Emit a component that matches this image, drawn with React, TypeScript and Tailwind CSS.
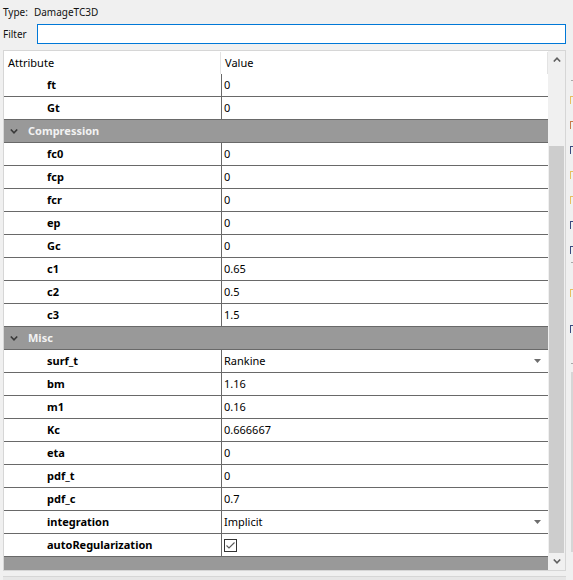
import React from 'react';

type Row =
  | { kind: 'attr'; name: string; value: string; dropdown?: boolean; check?: boolean }
  | { kind: 'group'; name: string };

const rows: Row[] = [
  { kind: 'attr', name: 'ft', value: '0' },
  { kind: 'attr', name: 'Gt', value: '0' },
  { kind: 'group', name: 'Compression' },
  { kind: 'attr', name: 'fc0', value: '0' },
  { kind: 'attr', name: 'fcp', value: '0' },
  { kind: 'attr', name: 'fcr', value: '0' },
  { kind: 'attr', name: 'ep', value: '0' },
  { kind: 'attr', name: 'Gc', value: '0' },
  { kind: 'attr', name: 'c1', value: '0.65' },
  { kind: 'attr', name: 'c2', value: '0.5' },
  { kind: 'attr', name: 'c3', value: '1.5' },
  { kind: 'group', name: 'Misc' },
  { kind: 'attr', name: 'surf_t', value: 'Rankine', dropdown: true },
  { kind: 'attr', name: 'bm', value: '1.16' },
  { kind: 'attr', name: 'm1', value: '0.16' },
  { kind: 'attr', name: 'Kc', value: '0.666667' },
  { kind: 'attr', name: 'eta', value: '0' },
  { kind: 'attr', name: 'pdf_t', value: '0' },
  { kind: 'attr', name: 'pdf_c', value: '0.7' },
  { kind: 'attr', name: 'integration', value: 'Implicit', dropdown: true },
  { kind: 'attr', name: 'autoRegularization', value: '', check: true },
];

// icon edges of the neighbouring tree, cut off by the splitter
const sideIcons = ['#e8c060', '#c87a4a', '#3a4a80', '#e8c060', '#e8c060', '#3a4a80', '#3a4a80'];

function IconEdge({ color }: { color: string }) {
  return (
    <svg width="3" height="8" viewBox="0 0 3 8">
      <rect x="0" y="0" width="3" height="1" fill={color} />
      <rect x="0" y="0" width="1" height="8" fill={color} />
    </svg>
  );
}

function DropArrow() {
  return (
    <svg width="7" height="5" viewBox="0 0 7 5">
      <polygon points="0,0 7,0 3.5,4" fill="#6d6d6d" />
    </svg>
  );
}

function Chevron({ up, color }: { up?: boolean; color: string }) {
  return (
    <svg width="8" height="5" viewBox="0 0 8 5">
      <polyline
        points={up ? '0.8,4.5 4,1.2 7.2,4.5' : '0.8,0.5 4,3.8 7.2,0.5'}
        fill="none"
        stroke={color}
        strokeWidth="1.6"
      />
    </svg>
  );
}

function CheckBox() {
  return (
    <div className="w-[13px] h-[13px] border border-[#333] bg-white flex items-center justify-center">
      <svg width="11" height="11" viewBox="0 0 11 11">
        <polyline points="1.5,5.5 4,8 9.5,2.5" fill="none" stroke="#5a5a5a" strokeWidth="1.1" />
      </svg>
    </div>
  );
}

export default function App() {
  return (
    <div className="w-[573px] h-[580px] bg-[#f0f0f0] flex overflow-hidden font-['Noto_Sans',sans-serif] text-black">
      <div className="w-[566px] flex flex-col shrink-0">
        {/* type line */}
        <div className="h-[24px] pl-[3px] flex items-center text-[10px] text-[#111]">
          <span>Type:</span>
          <span className="ml-[6px]">DamageTC3D</span>
        </div>

        {/* filter */}
        <div className="h-[20px] flex items-center">
          <span className="w-[37px] pl-[3px] text-[10px] text-[#111]">Filter</span>
          <div className="flex-1 h-[20px] border border-[#0078d7] bg-white" />
        </div>

        {/* property grid */}
        <div className="mt-[6px] ml-[3px] h-[521px] border border-[#d6d6d6] bg-white flex overflow-hidden">
          <div className="w-[544px] flex flex-col text-[11px]">
            <div className="h-[23px] pt-[1px] flex items-center shrink-0">
              <div className="w-[217px] h-full pl-[4px] flex items-center border-r border-[#e3e3e3]">Attribute</div>
              <div className="flex-1 h-full pl-[4px] flex items-center border-r border-[#e3e3e3]">Value</div>
            </div>

            {rows.map((r, i) =>
              r.kind === 'group' ? (
                <div key={i} className="h-[23px] shrink-0 pt-[1px] bg-[#999999] border-b border-[#696969] flex items-center">
                  <span className="ml-[6px] mr-[10px] flex">
                    <Chevron color="#3a3a3a" />
                  </span>
                  <span className="font-bold text-[#f2f2f2]">{r.name}</span>
                </div>
              ) : (
                <div key={i} className="h-[23px] shrink-0 border-b border-[#696969] flex">
                  <div className="w-[218px] pl-[43px] pt-[1px] flex items-center font-bold border-r border-[#696969]">
                    {r.name}
                  </div>
                  <div className="flex-1 pl-[2px] pr-[7px] pt-[1px] flex items-center justify-between">
                    {r.check ? <CheckBox /> : <span>{r.value}</span>}
                    {r.dropdown && <DropArrow />}
                  </div>
                </div>
              )
            )}

            <div className="flex-1 bg-[#999999]" />
          </div>

          {/* vertical scrollbar */}
          <div className="w-[17px] bg-[#f0f0f0] flex flex-col">
            <div className="h-[17px] flex items-center justify-center">
              <Chevron up color="#5f5f5f" />
            </div>
            <div className="h-[78px]" />
            <div className="flex-1 mx-[1px] bg-[#cdcdcd]" />
            <div className="h-[17px] flex items-center justify-center">
              <Chevron color="#5f5f5f" />
            </div>
          </div>
        </div>

        <div className="mt-[5px] ml-[3px] flex-1 border-t border-[#d6d6d6] bg-[#e6e6e6]" />
      </div>

      {/* neighbouring panel edge */}
      <div className="flex-1 overflow-hidden pl-[4px] flex flex-col">
        <div className="h-[80px] shrink-0" />
        <div className="ml-[1px] border-t border-[#a8a8a8]" />
        <div className="h-[6px] shrink-0" />
        {sideIcons.map((c, i) => (
          <div key={i} className="h-[25px] shrink-0 flex items-center">
            <IconEdge color={c} />
          </div>
        ))}
        <div className="ml-[1px] border-t border-[#a8a8a8]" />
        <div className="h-[17px] shrink-0" />
        <div className="h-[25px] shrink-0 flex items-center">
          <IconEdge color="#e8c060" />
        </div>
        <div className="h-[11px] shrink-0" />
        <div className="h-[25px] shrink-0 flex items-center">
          <IconEdge color="#3a4a80" />
        </div>
        <div className="h-[22px] shrink-0" />
        <div className="ml-[1px] border-t border-[#a8a8a8]" />
        <div className="h-[8px] shrink-0" />
        <div className="ml-[1px] h-[180px] shrink-0 border border-[#d6d6d6] bg-white" />
      </div>
    </div>
  );
}
